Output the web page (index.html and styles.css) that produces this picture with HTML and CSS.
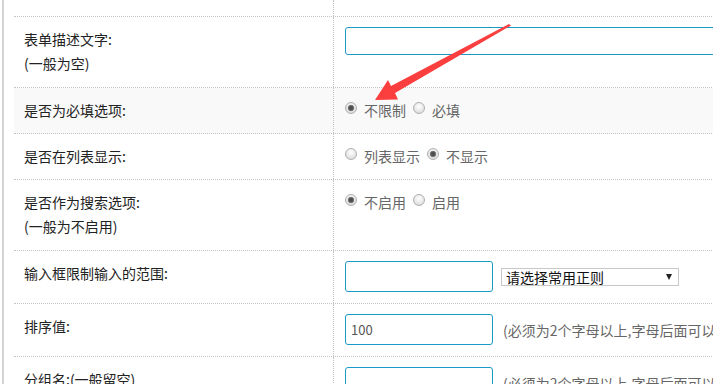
FILE: index.html
```html
<!DOCTYPE html>
<html lang="zh-CN">
<head>
<meta charset="utf-8">
<title>表单字段设置</title>
<link rel="stylesheet" href="styles.css">
</head>
<body>
<div class="page">
  <div class="form">
    <div class="row row-cut"><div class="label"></div><div class="value"></div></div>
    <div class="row">
      <div class="label tall">表单描述文字:<br>(一般为空)</div>
      <div class="value"><input class="inp inp-wide" type="text"></div>
    </div>
    <div class="row row-alt">
      <div class="label">是否为必填选项:</div>
      <div class="value">
        <label class="opt"><span class="radio on"></span>不限制</label>
        <label class="opt"><span class="radio"></span>必填</label>
      </div>
    </div>
    <div class="row">
      <div class="label">是否在列表显示:</div>
      <div class="value">
        <label class="opt"><span class="radio"></span>列表显示</label>
        <label class="opt"><span class="radio on"></span>不显示</label>
      </div>
    </div>
    <div class="row">
      <div class="label tall">是否作为搜索选项:<br>(一般为不启用)</div>
      <div class="value">
        <label class="opt"><span class="radio on"></span>不启用</label>
        <label class="opt"><span class="radio"></span>启用</label>
      </div>
    </div>
    <div class="row">
      <div class="label">输入框限制输入的范围:</div>
      <div class="value mid">
        <input class="inp" type="text">
        <span class="sel-wrap"><select class="sel"><option>请选择常用正则</option></select></span>
      </div>
    </div>
    <div class="row">
      <div class="label">排序值:</div>
      <div class="value mid">
        <input class="inp" type="text" value="100">
        <span class="hint">(必须为2个字母以上,字母后面可以加数字)</span>
      </div>
    </div>
    <div class="row">
      <div class="label">分组名:(一般留空)</div>
      <div class="value mid">
        <input class="inp" type="text">
        <span class="hint">(必须为2个字母以上,字母后面可以加数字)</span>
      </div>
    </div>
  </div>
</div>
<svg class="arrow" width="713" height="384" viewBox="0 0 713 384">
  <polygon points="509,24 511,25.5 395,93 398,99.5 375,100 388,80 391,86" fill="#fb3e3e"/>
</svg>
</body>
</html>
```
FILE: styles.css
```css
html, body {
  margin: 0;
  overflow: hidden;
}
body {
  font-family: "Noto Sans CJK SC", sans-serif;
  font-size: 14px;
  color: #222;
  background: #fff;
}
.page {
  margin-left: 2px;
  border-left: 2px solid #d4d4d4;
  padding-left: 10px;
  min-height: 384px;
}
.form {
  width: 1100px;
}
.row {
  display: grid;
  grid-template-columns: 320px 1fr;
  border-bottom: 1px dotted #c4c4c4;
}
.row-alt {
  background: #f9f9f9;
}
.label {
  box-sizing: border-box;
  border-right: 1px dotted #c4c4c4;
  padding: 10px 10px 11px;
  line-height: 24px;
}
.label.tall {
  padding-bottom: 12px;
}
.value {
  display: flex;
  align-items: flex-start;
  padding: 10px 11px 11px;
  line-height: 24px;
}
.value.mid {
  align-items: center;
}
.row-cut .label,
.row-cut .value {
  height: 16px;
  padding: 0;
}
.opt {
  display: flex;
  color: #666;
  margin-right: 7px;
}
.radio {
  box-sizing: border-box;
  width: 12px;
  height: 12px;
  margin: 4px 7px 0 0;
  border-radius: 50%;
  border: 1px solid #b0b0b0;
  background: radial-gradient(circle at 50% 35%, #ffffff 0, #e6e6e6 60%, #cfcfcf 100%);
}
.radio.on {
  background:
    radial-gradient(circle, #4a4a4a 0, #555 2px, #8a8a8a 3px, transparent 3.6px),
    radial-gradient(circle at 50% 35%, #ffffff 0, #e6e6e6 60%, #cfcfcf 100%);
}
.inp {
  box-sizing: border-box;
  width: 148px;
  height: 31px;
  margin: 0;
  padding: 0 5px;
  border: 1px solid #1b9ac6;
  border-radius: 3px;
  background: #fff;
  font-family: "Noto Sans CJK SC", sans-serif;
  font-size: 13px;
  color: #555;
  outline: none;
}
.inp-wide {
  width: 460px;
  height: 28px;
}
.hint {
  margin-left: 10px;
  color: #666;
  white-space: nowrap;
}
.sel-wrap {
  position: relative;
  display: inline-flex;
  margin-left: 8px;
}
.sel-wrap::after {
  content: "";
  position: absolute;
  right: 7px;
  top: 6px;
  border-left: 3px solid transparent;
  border-right: 3px solid transparent;
  border-top: 6px solid #222;
  pointer-events: none;
}
.sel {
  -webkit-appearance: none;
  appearance: none;
  box-sizing: border-box;
  width: 178px;
  height: 18px;
  margin: 0;
  padding: 0 4px;
  border: 1px solid #c8c8c8;
  border-radius: 0;
  background: #fff;
  font-family: "Noto Sans CJK SC", sans-serif;
  font-size: 14px;
  line-height: 16px;
  color: #111;
  outline: none;
}
.arrow {
  position: absolute;
  left: 0;
  top: 0;
  pointer-events: none;
}
```
